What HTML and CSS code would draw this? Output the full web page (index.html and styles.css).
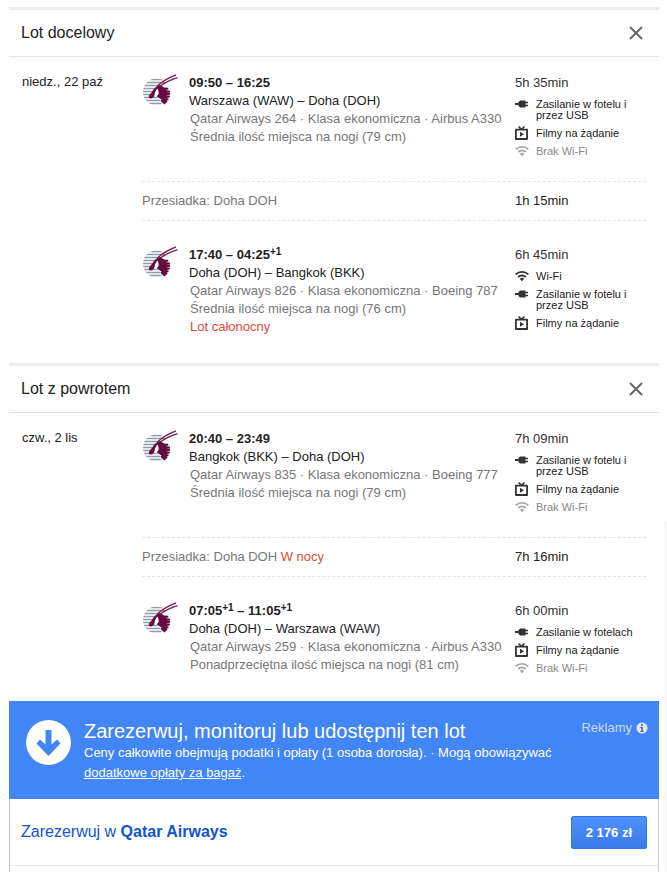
FILE: index.html
```html
<!DOCTYPE html>
<html lang="pl">
<head>
<meta charset="utf-8">
<meta name="viewport" content="width=device-width, initial-scale=1">
<title>Lot docelowy i powrotny</title>
<link rel="stylesheet" href="styles.css">
</head>
<body>
<svg class="sprite" aria-hidden="true">
  <symbol id="plug" viewBox="0 0 14 14">
    <path d="M0 6h3.500V5L5 3.500h5.500v1.300H13v1.400h-2.500v1.600H13v1.400h-2.500v1.300H5L3.500 9V8H0z"/>
  </symbol>
  <symbol id="film" viewBox="0 0 14 14">
    <path fill-rule="evenodd" d="M3 1l1-1 2.500 2.300L9 0l1 1-1.700 1.700H12a1 1 0 0 1 1 1V13a1 1 0 0 1-1 1H1a1 1 0 0 1-1-1V3.700a1 1 0 0 1 1-1h3.700zM1.800 4.600v7.500h9.400V4.600zM5 5.800l4 2.500-4 2.500z"/>
  </symbol>
  <symbol id="wifi" viewBox="0 0 14 14">
    <path d="M.7 5.400a9 9 0 0 1 12.600 0M3.200 8a5.400 5.400 0 0 1 7.600 0" fill="none" stroke="currentColor" stroke-width="1.900"/>
    <path d="M4.800 9.800a3.200 3.200 0 0 1 4.400 0L7 12.200z"/>
  </symbol>
  <symbol id="close" viewBox="0 0 14 14">
    <path d="M1 1l12 12M13 1 1 13" fill="none" stroke="currentColor" stroke-width="2"/>
  </symbol>
  <symbol id="oryx" viewBox="0 0 36 34">
    <clipPath id="disc"><circle cx="14.500" cy="18" r="13.500"/></clipPath>
    <g clip-path="url(#disc)">
      <path d="M0 5.500h29M0 8.500h29M0 11.500h29M0 14.500h29M0 17.500h29M0 20.500h29M0 23.500h29M0 26.500h29M0 29.500h29" stroke="#8d9ba8" stroke-width="1.300"/>
      <path d="M19 11h11v17l-6 4-5-3-1-4-4-2z" fill="#fff"/>
    </g>
    <path d="M15 12.500l3.500-1.300 3.500 2.300 4 .3.500 1.700-3 .5 4.500.8v1.700l-4 .5h4v1.800l-4 .5 4 .5-.5 1.700-3 .5 2.500.8-1 1.500-1.500.4 1 .8-3 3-4-3.500 1-1.500-4-2.500-3-3z" fill="#650b40"/>
    <path d="M17.500 11.500c-3.500.5-5.500 3-7.500 6.500-2.500 2.500-3.800 4-3 5.800 1.200 1.500 4 .5 5.500-2l1.500-4 4-3z" fill="#650b40"/>
    <path d="M15.300 14.500c-1.700 2.500-2.800 4.500-2.800 7.800 1.500.6 3-.2 3.800-1.800.8-2 .3-4-1-6z" fill="#fff"/>
    <path d="M15 12.500C20 7.500 26 4 34 .9M18.500 12C23 8.500 28 6 35.500 3.700" fill="none" stroke="#762250" stroke-width="1.400"/>
  </symbol>
</svg>

<main class="page">
  <section class="trip">
    <header class="trip-head">
      <h2>Lot docelowy</h2>
      <button class="close" type="button" aria-label="Zamknij"><svg><use href="#close"/></svg></button>
    </header>
    <div class="trip-body">
      <div class="date">niedz., 22 paź</div>
      <div class="legs">
        <article class="flight">
          <svg class="logo"><use href="#oryx"/></svg>
          <div class="details">
            <div class="time">09:50 – 16:25</div>
            <div>Warszawa (WAW) – Doha (DOH)</div>
            <div class="note">Qatar Airways 264 · Klasa ekonomiczna · Airbus A330</div>
            <div class="note">Średnia ilość miejsca na nogi (79 cm)</div>
          </div>
          <div class="side">
            <div>5h 35min</div>
            <ul class="amenities">
              <li><svg><use href="#plug"/></svg><span>Zasilanie w fotelu i przez USB</span></li>
              <li><svg><use href="#film"/></svg><span>Filmy na żądanie</span></li>
              <li class="off"><svg><use href="#wifi"/></svg><span>Brak Wi-Fi</span></li>
            </ul>
          </div>
        </article>
        <div class="stop"><div class="stop-name">Przesiadka: Doha DOH</div><div class="stop-time">1h 15min</div></div>
        <article class="flight">
          <svg class="logo"><use href="#oryx"/></svg>
          <div class="details">
            <div class="time">17:40 – 04:25<sup>+1</sup></div>
            <div>Doha (DOH) – Bangkok (BKK)</div>
            <div class="note">Qatar Airways 826 · Klasa ekonomiczna · Boeing 787</div>
            <div class="note">Średnia ilość miejsca na nogi (76 cm)</div>
            <div class="note warn">Lot całonocny</div>
          </div>
          <div class="side">
            <div>6h 45min</div>
            <ul class="amenities">
              <li><svg><use href="#wifi"/></svg><span>Wi-Fi</span></li>
              <li><svg><use href="#plug"/></svg><span>Zasilanie w fotelu i przez USB</span></li>
              <li><svg><use href="#film"/></svg><span>Filmy na żądanie</span></li>
            </ul>
          </div>
        </article>
      </div>
    </div>
  </section>

  <section class="trip">
    <header class="trip-head">
      <h2>Lot z powrotem</h2>
      <button class="close" type="button" aria-label="Zamknij"><svg><use href="#close"/></svg></button>
    </header>
    <div class="trip-body">
      <div class="date">czw., 2 lis</div>
      <div class="legs">
        <article class="flight">
          <svg class="logo"><use href="#oryx"/></svg>
          <div class="details">
            <div class="time">20:40 – 23:49</div>
            <div>Bangkok (BKK) – Doha (DOH)</div>
            <div class="note">Qatar Airways 835 · Klasa ekonomiczna · Boeing 777</div>
            <div class="note">Średnia ilość miejsca na nogi (79 cm)</div>
          </div>
          <div class="side">
            <div>7h 09min</div>
            <ul class="amenities">
              <li><svg><use href="#plug"/></svg><span>Zasilanie w fotelu i przez USB</span></li>
              <li><svg><use href="#film"/></svg><span>Filmy na żądanie</span></li>
              <li class="off"><svg><use href="#wifi"/></svg><span>Brak Wi-Fi</span></li>
            </ul>
          </div>
        </article>
        <div class="stop"><div class="stop-name">Przesiadka: Doha DOH <span class="warn">W nocy</span></div><div class="stop-time">7h 16min</div></div>
        <article class="flight">
          <svg class="logo"><use href="#oryx"/></svg>
          <div class="details">
            <div class="time">07:05<sup>+1</sup> – 11:05<sup>+1</sup></div>
            <div>Doha (DOH) – Warszawa (WAW)</div>
            <div class="note">Qatar Airways 259 · Klasa ekonomiczna · Airbus A330</div>
            <div class="note">Ponadprzeciętna ilość miejsca na nogi (81 cm)</div>
          </div>
          <div class="side">
            <div>6h 00min</div>
            <ul class="amenities">
              <li><svg><use href="#plug"/></svg><span>Zasilanie w fotelach</span></li>
              <li><svg><use href="#film"/></svg><span>Filmy na żądanie</span></li>
              <li class="off"><svg><use href="#wifi"/></svg><span>Brak Wi-Fi</span></li>
            </ul>
          </div>
        </article>
      </div>
    </div>
  </section>

  <section class="banner">
    <svg class="arrow" viewBox="0 0 45 45" aria-hidden="true"><circle cx="22.500" cy="22.500" r="22.500" fill="#fff"/><path d="M19.500 10h6v14.500l5.500-5 3.500 4L22.500 36 10.500 23.500l3.500-4 5.500 5z" fill="#4285f4"/></svg>
    <div class="banner-text">
      <h2>Zarezerwuj, monitoruj lub udostępnij ten lot</h2>
      <p>Ceny całkowite obejmują podatki i opłaty (1 osoba dorosła). · Mogą obowiązywać <a href="#">dodatkowe opłaty za bagaż</a>.</p>
    </div>
    <div class="ads">Reklamy <svg viewBox="0 0 12 12" aria-hidden="true"><circle cx="6" cy="6" r="5.500" fill="#e4e8ee"/><path d="M5 2h2v2H5zM4 5h3v4h1v1H4V9h1V6H4z" fill="#71798a"/></svg></div>
  </section>
  <section class="offers">
    <div class="offer">
      <a href="#">Zarezerwuj w <b>Qatar Airways</b></a>
      <button class="price" type="button">2 176 zł</button>
    </div>
  </section>
</main>
<div class="edge-shadow"></div>
</body>
</html>
```
FILE: styles.css
```css
* { box-sizing: border-box; }

body {
  margin: 0;
  background: #fff;
  color: #222;
  font: 13px/18px "Liberation Sans", Arial, sans-serif;
}

h2, p, ul { margin: 0; padding: 0; font-weight: normal; }
svg { display: block; flex: none; fill: currentColor; }
.sprite { position: absolute; width: 0; height: 0; }

.page {
  display: flex;
  flex-direction: column;
  min-height: 100vh;
  padding: 7px 8px 0 9px;
}

.trip { border-top: 3px solid #ebebeb; }

.trip-head {
  display: flex;
  align-items: center;
  justify-content: space-between;
  height: 47px;
  padding: 0 16px 0 12px;
  border-bottom: 1px solid #e5e5e5;
}
.trip-head h2 { font-size: 16px; }

.close {
  padding: 0;
  border: 0;
  background: none;
  color: #666;
}
.close svg { width: 14px; height: 14px; }

.trip-body {
  display: flex;
  padding: 17px 13px 27px;
}
.date { flex: none; width: 120px; line-height: 16px; }
.legs { flex: 1; }

.flight { display: flex; }
.logo { width: 36px; height: 34px; margin-right: 11px; }
.details { flex: 1; white-space: nowrap; }
.time { font-weight: bold; }
.time sup { font-size: 10px; line-height: 0; vertical-align: 4px; }
.note { padding-left: 1px; color: #777; }
.warn, .note.warn { color: #dd4b39; }

.side { flex: none; width: 131px; color: #333; }
.amenities {
  display: grid;
  gap: 7px;
  margin-top: 7px;
  color: #222;
  font-size: 11px;
  line-height: 11px;
  list-style: none;
}
.amenities li { display: flex; gap: 7px; padding-right: 8px; }
.amenities svg { width: 14px; height: 14px; margin: -2px 0 -1px; color: #333; }
.amenities .off { color: #888; }
.amenities .off svg { color: #aaa; }

.stop {
  display: flex;
  margin: 24px 0 25px;
  padding: 10px 0;
  border: dashed #e5e5e5;
  border-width: 1px 0;
}
.stop-name { flex: 1; color: #777; }
.stop-time { width: 131px; }

.banner {
  display: flex;
  padding: 19px 11px 16px 17px;
  background: #4285f4;
  color: #fff;
}
.arrow { width: 45px; height: 45px; margin-right: 13px; }
.banner-text { flex: 1; }
.banner h2 { font-size: 20px; line-height: 23px; }
.banner p { line-height: 20px; }
.banner a { color: inherit; }
.ads {
  display: flex;
  gap: 4px;
  align-items: center;
  height: 16px;
  color: #c9dcfc;
}
.ads svg { width: 12px; height: 12px; }

.offers {
  flex: 1;
  border: solid #ccc;
  border-width: 0 1px;
}
.offer {
  display: flex;
  align-items: center;
  justify-content: space-between;
  height: 67px;
  padding: 0 11px;
  border-bottom: 1px solid #e5e5e5;
}
.offer a { color: #15c; font-size: 16px; text-decoration: none; }
.price {
  height: 33px;
  padding: 0 14px;
  border: 1px solid #3079ed;
  border-radius: 2px;
  background: linear-gradient(#4d90fe, #3a7be8);
  color: #fff;
  font: bold 13px "Liberation Sans", Arial, sans-serif;
}

/* Soft shadow of the panel docked past the right edge */
.edge-shadow {
  position: fixed;
  top: 522px;
  right: 0;
  bottom: 0;
  width: 4px;
  background: linear-gradient(to right, #fff, #f3f3f3);
}
```
